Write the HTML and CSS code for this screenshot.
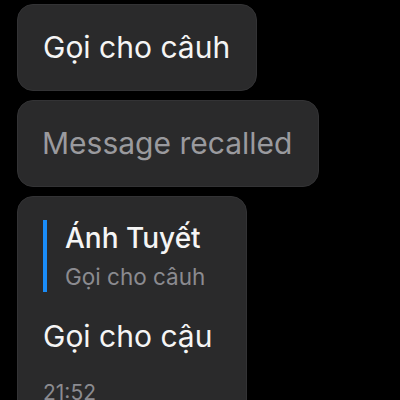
FILE: index.html
```html
<!DOCTYPE html>
<html lang="vi">
<head>
<meta charset="utf-8">
<link rel="stylesheet" href="styles.css">
</head>
<body>
<div class="chat">
  <div class="bubble"><span class="text">Gọi cho câuh</span></div>
  <div class="bubble"><span class="text recalled">Message recalled</span></div>
  <div class="bubble reply">
    <div class="quote">
      <div class="quote-name">Ánh Tuyết</div>
      <div class="quote-text">Gọi cho câuh</div>
    </div>
    <div class="text main">Gọi cho cậu</div>
    <div class="time">21:52</div>
  </div>
</div>
</body>
</html>
```
FILE: styles.css
```css
html, body {
  margin: 0;
  padding: 0;
  background: #000;
  width: 400px;
  height: 400px;
  overflow: hidden;
}
body {
  font-family: Inter, "Noto Sans", sans-serif;
  color: #f5f5f5;
}
.chat {
  display: flex;
  flex-direction: column;
  align-items: flex-start;
  gap: 9px;
  padding: 4px 0 0 17px;
}
.bubble {
  background: #2a2a2b;
  border: 1px solid #333335;
  border-radius: 16px;
  padding: 24px 26px 25px 25px;
}
.text {
  display: block;
  font-size: 30px;
  line-height: 36px;
  font-weight: 400;
  white-space: nowrap;
}
.recalled {
  color: #9a9a9e;
  margin-left: -1px;
}
.reply {
  padding-top: 23px;
  padding-right: 34px;
}
.quote {
  border-left: 4px solid #1a8cf8;
  padding: 1px 0 1px 18px;
}
.quote-name {
  font-size: 28px;
  line-height: 34px;
  font-weight: 500;
  color: #f5f5f5;
  white-space: nowrap;
}
.quote-text {
  margin-top: 8px;
  font-size: 22.5px;
  line-height: 28px;
  color: #8b8b90;
  white-space: nowrap;
}
.main {
  margin-top: 26px;
}
.time {
  margin-top: 27px;
  font-size: 21px;
  line-height: 24px;
  color: #8b8b90;
}
```
